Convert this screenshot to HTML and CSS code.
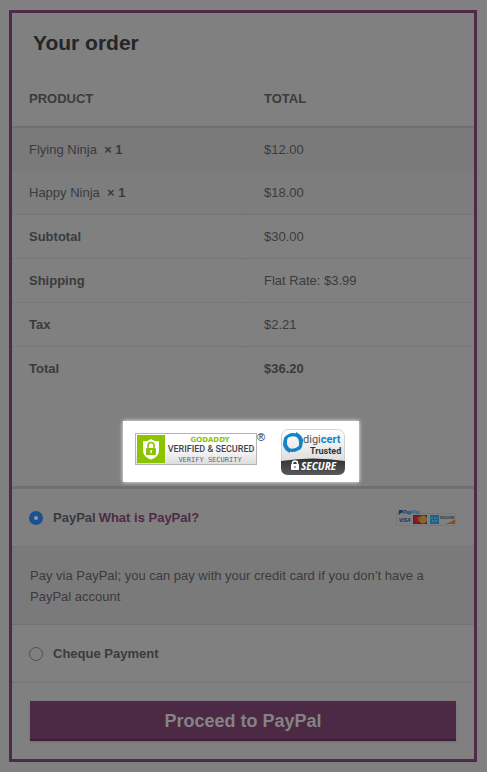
FILE: index.html
```
<!DOCTYPE html>
<html lang="en">

<head>
    <meta charset="UTF-8">
    <meta name="viewport" content="width=device-width, initial-scale=1.0">
    <link rel="stylesheet" href="styles.css">
    <title>Your order</title>
</head>

<body>
    <form class="order">
        <h1>Your order</h1>

        <table class="order-table">
            <thead>
                <tr>
                    <th>PRODUCT</th>
                    <th>TOTAL</th>
                </tr>
            </thead>
            <tbody>
                <tr class="item odd">
                    <td>Flying Ninja &nbsp;<strong>× 1</strong></td>
                    <td>$12.00</td>
                </tr>
                <tr class="item">
                    <td>Happy Ninja &nbsp;<strong>× 1</strong></td>
                    <td>$18.00</td>
                </tr>
            </tbody>
            <tfoot>
                <tr>
                    <th>Subtotal</th>
                    <td>$30.00</td>
                </tr>
                <tr>
                    <th>Shipping</th>
                    <td>Flat Rate: $3.99</td>
                </tr>
                <tr>
                    <th>Tax</th>
                    <td>$2.21</td>
                </tr>
                <tr>
                    <th>Total</th>
                    <td><strong>$36.20</strong></td>
                </tr>
            </tfoot>
        </table>

        <!-- security seals -->
        <div class="seals">
            <svg class="godaddy" width="132" height="34" viewBox="0 0 132 34">
                <defs>
                    <linearGradient id="seal" x1="0" y1="0" x2="0" y2="1">
                        <stop offset="0.4" stop-color="#fff" />
                        <stop offset="1" stop-color="#dcdcdc" />
                    </linearGradient>
                </defs>
                <rect x="0.5" y="1.5" width="121" height="31" fill="url(#seal)" stroke="#b4b4b8" />
                <rect x="2" y="3" width="28" height="28" fill="#8cc403" />
                <path d="M16 7c3 2 5 2.500 8 2v9c0 5-3 7.500-8 9.500c-5-2-8-4.500-8-9.500V9c3 .5 5 0 8-2z" fill="#fff" />
                <path d="M13 16v-2.500a3 3 0 0 1 6 0V16" fill="none" stroke="#8cc403" stroke-width="1.600" />
                <rect x="11" y="16" width="10" height="7" rx="1" fill="#8cc403" />
                <path d="M15.500 18h1.500v3h-1.500z" fill="#fff" />
                <text class="brand" x="75" y="10">GODADDY</text>
                <text class="verified" x="76" y="20">VERIFIED &amp; SECURED</text>
                <text class="verify" x="75" y="30">VERIFY SECURITY</text>
                <text class="reg" x="122" y="9">®</text>
            </svg>
            <svg class="digicert" width="64" height="48" viewBox="0 0 64 48">
                <defs>
                    <linearGradient id="light" x1="0" y1="0" x2="0" y2="1">
                        <stop offset="0" stop-color="#fff" />
                        <stop offset="1" stop-color="#cfcfcf" />
                    </linearGradient>
                    <linearGradient id="dark" x1="0" y1="0" x2="0" y2="1">
                        <stop offset="0" stop-color="#303033" />
                        <stop offset="1" stop-color="#59595c" />
                    </linearGradient>
                </defs>
                <rect x="0.5" y="1.5" width="63" height="45" rx="7" fill="url(#light)" stroke="#d2d2d2" />
                <path d="M0 33q32-5 64 0v7q0 7-7 7H7q-7 0-7-7z" fill="url(#dark)" />
                <g fill="#1583c8">
                    <path d="M3 10q4-5 9-5q5 0 7 3l-1 2q-7-4-13 1l-2 3z" />
                    <path d="M15 4q6 3 7 8q0 6-3 10l-2-1q3-8-2-13z" />
                    <path d="M21 18q-3 6-10 6q-4 0-7-3l1-2q7 4 13-1l2-3z" />
                    <path d="M9 25q-6-3-7-8q0-6 3-9l2 1q-3 7 2 12z" />
                </g>
                <text class="digi" x="22" y="15">digi<tspan class="cert">cert</tspan></text>
                <text class="trusted" x="29" y="26">Trusted</text>
                <path d="M11.500 37v-1.500a2.500 2.500 0 0 1 5 0V37" fill="none" stroke="#fff" stroke-width="1.500" />
                <rect x="10" y="36" width="8" height="6" rx="1" fill="#fff" />
                <path d="M13.500 38h1v2h-1z" fill="#444" />
                <text class="secure" x="20" y="42">SECURE</text>
            </svg>
        </div>

        <div class="payment">
            <div class="method">
                <input type="radio" name="payment" id="paypal" checked>
                <label for="paypal">PayPal</label>
                <a href="#">What is PayPal?</a>
                <svg class="cards" width="60" height="18" viewBox="0 0 60 18">
                    <path d="M2 4.500H1q-.5 0-.5 1v10q0 1 1 1h57q1 0 1-1v-10q0-1-1-1H20" fill="none" stroke="#777" />
                    <path d="M3 1h3q2 1 0 3H4.500L4 5.500H2.500z" fill="#113763" />
                    <text class="pp" x="7" y="5">Pay<tspan class="pal">Pal</tspan></text>
                    <text class="visa" x="3" y="13">VISA</text>
                    <rect x="17" y="6" width="14" height="9" fill="#173461" />
                    <circle cx="21" cy="10.500" r="4" fill="#7d1d20" />
                    <circle cx="27" cy="10.500" r="4" fill="#8d6420" />
                    <path d="M21 9h6M21 11h6" stroke="#8b5940" />
                    <rect x="34" y="6" width="9" height="9" fill="#1f6287" />
                    <path d="M35 9h7M36 12h6" stroke="#6a8490" stroke-dasharray="2 1" />
                    <path d="M59 10v5H48q7-1 11-5z" fill="#8c4b1b" />
                    <text class="disc" x="44" y="10">DISCOVER</text>
                </svg>
            </div>
            <p class="description">Pay via PayPal; you can pay with your credit card if you don’t have a PayPal account</p>
            <div class="method">
                <input type="radio" name="payment" id="cheque">
                <label for="cheque">Cheque Payment</label>
            </div>
        </div>

        <button type="submit">Proceed to PayPal</button>
    </form>
</body>

</html>
```
FILE: styles.css
```
body {
    font-family: 'Liberation Sans', Arial, sans-serif;
    font-size: 13px;
    line-height: 21px;
    background-color: #808080;
    color: #3a3b3e;
    margin: 10px 10px 10px 9px;
}

.order {
    border: 3px solid #4f2a48;
}

h1 {
    font-size: 21px;
    line-height: 24px;
    color: #242628;
    margin: 18px 21px 17px;
}

.order-table {
    width: 100%;
    table-layout: fixed;
    border-collapse: collapse;
}

th,
td {
    padding: 11px 17px;
    text-align: left;
    border-bottom: 1px dotted #6e6e6e;
}

thead th {
    padding: 16px 17px 17px;
    border-bottom: 2px solid #707070;
}

th:last-child,
td:last-child {
    padding-left: 21px;
}

.item {
    background-color: #7d7d7d;
}

.odd {
    background-color: #7a7a7a;
}

.odd td {
    border-bottom: none;
}

tfoot tr:last-child th,
tfoot tr:last-child td {
    border-bottom: none;
}

.seals {
    display: flex;
    align-items: flex-start;
    gap: 14px;
    width: fit-content;
    margin: 31px 0 4px 24%;
    padding: 7px 14px 6px 12px;
    background-color: #fff;
    box-shadow: 0 0 4px #fff;
}

.godaddy {
    margin-top: 4px;
}

svg {
    flex-shrink: 0;
}

.brand {
    font: bold 7px 'DejaVu Sans', sans-serif;
    text-anchor: middle;
    fill: #8cc403;
}

.verified {
    font: 500 9px Roboto, sans-serif;
    text-anchor: middle;
    fill: #40444e;
}

.verify {
    font: 7px 'DejaVu Sans Mono', monospace;
    text-anchor: middle;
    fill: #5d6780;
}

.reg {
    font: 11px 'Liberation Sans', sans-serif;
    fill: #222;
}

.digi {
    font: 11px Roboto, sans-serif;
    fill: #555;
}

.cert {
    font-weight: bold;
    fill: #1583c8;
}

.trusted {
    font: bold 9px Roboto, sans-serif;
    fill: #333;
}

.secure {
    font: italic bold 10px 'Open Sans', sans-serif;
    fill: #fff;
}

.payment {
    border-top: 3px solid #707070;
}

.method {
    display: flex;
    align-items: center;
    padding: 18px;
    border-bottom: 1px dotted #6e6e6e;
    font-weight: bold;
}

.method input {
    appearance: none;
    box-sizing: border-box;
    width: 14px;
    height: 14px;
    margin: 0 10px 0 -1px;
    border: 1px solid #505050;
    border-radius: 50%;
}

.method input:checked {
    border: 5px solid #1b518d;
    background-color: #909aa5;
}

.method a {
    margin-left: 3px;
    color: #4f2a48;
    text-decoration: none;
}

.cards {
    margin-left: auto;
}

.pp {
    font: italic bold 5px 'Liberation Sans', sans-serif;
    fill: #113763;
}

.pal {
    fill: #13698e;
}

.visa {
    font: italic bold 5px 'Liberation Sans', sans-serif;
    fill: #162d5c;
}

.disc {
    font: bold 3px Roboto, sans-serif;
    fill: #333;
}

.description {
    margin: 0;
    padding: 18px 18px 17px;
    background-color: #7a7a7a;
    border-bottom: 1px dotted #6e6e6e;
}

button {
    display: block;
    width: calc(100% - 36px);
    margin: 18px;
    padding: 6px 6px 4px;
    border: none;
    border-bottom: 2px solid #3c2037;
    box-shadow: 0 1px 2px #6e6e6e;
    background-color: #4c2a45;
    color: #848484;
    font: bold 18px/28px 'Liberation Sans', Arial, sans-serif;
    cursor: pointer;
}
```
